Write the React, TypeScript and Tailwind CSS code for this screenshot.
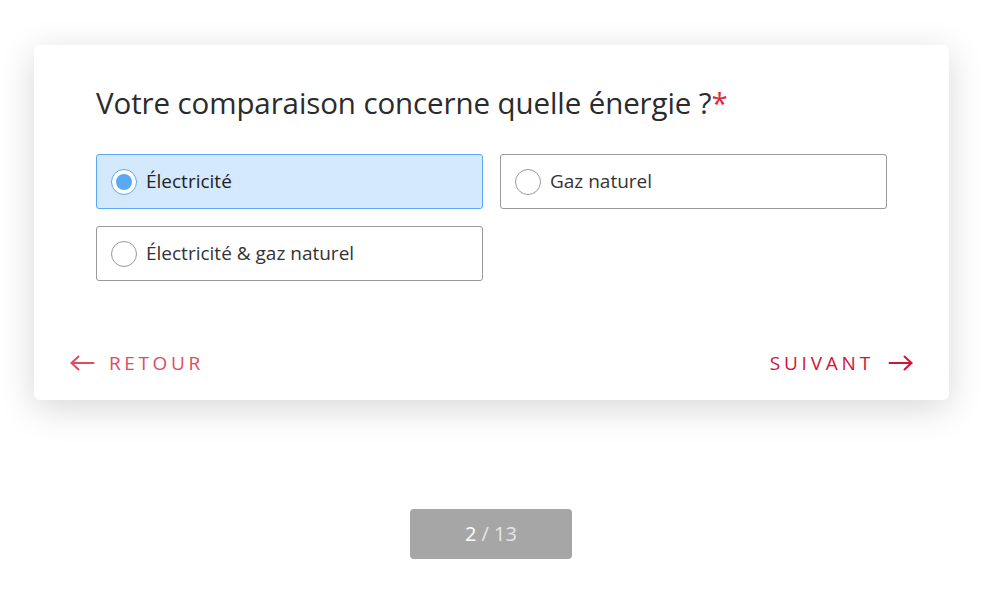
import React, { useState } from "react";

const OPTIONS = ["Électricité", "Gaz naturel", "Électricité & gaz naturel"];

function Radio({ checked }: { checked: boolean }) {
  return (
    <span
      className={
        "flex h-[26px] w-[26px] shrink-0 items-center justify-center rounded-full border bg-white " +
        (checked ? "border-[#5aa9f6]" : "border-[#9a9a9a]")
      }
    >
      {checked && <span className="h-[16px] w-[16px] rounded-full bg-[#5aa9f6]" />}
    </span>
  );
}

function Arrow({ dir }: { dir: "left" | "right" }) {
  return (
    <svg width="25" height="16" viewBox="0 0 25 16" fill="none" stroke="currentColor" strokeWidth="2" strokeLinecap="round" strokeLinejoin="round">
      {dir === "left" ? (
        <>
          <path d="M1.5 8h22" />
          <path d="M8.5 1.5 1.5 8l7 6.5" />
        </>
      ) : (
        <>
          <path d="M1.5 8h22" />
          <path d="M16.5 1.5 23.5 8l-7 6.5" />
        </>
      )}
    </svg>
  );
}

export default function App() {
  const [value, setValue] = useState(0);
  return (
    <div className="min-h-[591px] w-[982px] bg-white font-['Open_Sans',sans-serif] text-[#333]">
      <div className="px-[34px] pt-[45px]">
        <div className="w-[915px] rounded-[6px] bg-white shadow-[0_8px_36px_rgba(0,0,0,0.16)]">
          <div className="px-[62px] pt-[38px]">
            <h1 className="text-[29.5px] leading-[40px] tracking-[-0.1px] text-[#2b2b2b]">
              Votre comparaison concerne quelle énergie ?<span className="text-[#e0263e]">*</span>
            </h1>
            <div className="mt-[31px] grid grid-cols-2 gap-[17px]">
              {OPTIONS.map((o, i) => (
                <button
                  key={o}
                  onClick={() => setValue(i)}
                  className={
                    "flex h-[55px] items-center gap-[9px] rounded-[3px] border px-[14px] text-left text-[19px] " +
                    (value === i ? "border-[#5aa9f6] bg-[#d5e9fd] text-[#222]" : "border-[#999] bg-white text-[#333]")
                  }
                >
                  <Radio checked={value === i} />
                  <span>{o}</span>
                </button>
              ))}
            </div>
          </div>
          <div className="mt-[68px] flex items-center justify-between px-[36px] pb-[22px]">
            <button className="flex items-center gap-[14px] text-[#e14b62]">
              <Arrow dir="left" />
              <span className="text-[19px] tracking-[3.6px]">RETOUR</span>
            </button>
            <button className="flex items-center gap-[14px] text-[#d3123b]">
              <span className="text-[19px] tracking-[3.8px]">SUIVANT</span>
              <Arrow dir="right" />
            </button>
          </div>
        </div>
      </div>
      <div className="mt-[109px] flex justify-center">
        <div className="flex h-[50px] w-[162px] items-center justify-center rounded-[4px] bg-[#a6a6a6] text-[20px]">
          <span className="text-white">2</span>
          <span className="ml-[5px] text-[#e6e6e6]">/ 13</span>
        </div>
      </div>
    </div>
  );
}
